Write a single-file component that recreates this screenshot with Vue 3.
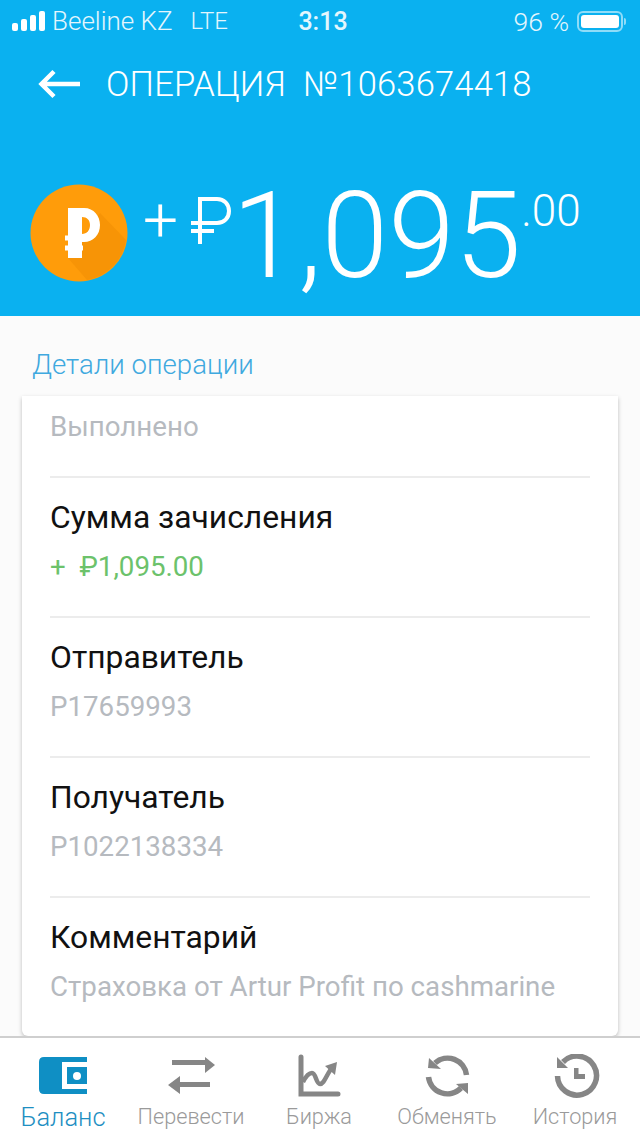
<script setup>
const rows = [
  { title: "Сумма зачисления", value: "+  ₽1,095.00", green: true },
  { title: "Отправитель", value: "P17659993" },
  { title: "Получатель", value: "P1022138334" },
  { title: "Комментарий", value: "Страховка от Artur Profit по cashmarine" },
];
</script>

<template>
  <main class="page">
    <header class="top">
      <div class="status">
        <div class="status-left">
          <span class="signal"><i></i><i></i><i></i><i></i></span>
          <span class="carrier">Beeline KZ</span>
          <span class="lte">LTE</span>
        </div>
        <span class="time">3:13</span>
        <div class="status-right">
          <span>96 %</span>
          <span class="battery"><b></b></span>
          <span class="battery-tip"></span>
        </div>
      </div>
      <div class="title-row">
        <svg class="back" width="44" height="32" viewBox="0 0 44 32">
          <path d="M42 16H4M16 3.500 3.500 16 16 28.500" fill="none" stroke="#fff" stroke-width="4.500" />
        </svg>
        <h1>ОПЕРАЦИЯ&nbsp; №1063674418</h1>
      </div>
      <div class="amount-row">
        <div class="coin">
          <svg width="98" height="98" viewBox="0 0 98 98">
            <circle cx="49" cy="49" r="48.500" fill="#ff9c0a" />
            <path d="M70 29 96 56A48 48 0 0 1 57 96L38 74Z" fill="#f79406" />
            <path fill-rule="evenodd" d="M38 24H54C64 24 70 32 70 41 70 51 63 58 54 58H52V74H38ZM52 33V50C57 50 60 46 60 41 60 36 57 33 52 33Z" fill="#fff" />
            <path d="M35 54H53M35 64H53" stroke="#fff" stroke-width="5" />
          </svg>
        </div>
        <span class="plus">+</span>
        <svg class="rub" width="40" height="47" viewBox="0 0 40 47">
          <path d="M9 47V2H26C33 2 38 7 38 14 38 21 33 26 26 26H0M0 34H23" fill="none" stroke="#fff" stroke-width="4" />
        </svg>
        <span class="sum">1,095</span>
        <span class="cents">.00</span>
      </div>
    </header>

    <section class="details">
      <h2>Детали операции</h2>
      <div class="card">
        <div class="row first">
          <span class="value">Выполнено</span>
        </div>
        <div v-for="row in rows" :key="row.title" class="row">
          <span class="label">{{ row.title }}</span>
          <span class="value" :class="{ green: row.green }">{{ row.value }}</span>
        </div>
      </div>
    </section>

    <nav class="tabs">
      <div class="tab active">
        <svg width="50" height="46" viewBox="0 0 50 46">
          <path d="M5 3H48V8H23V35H48V40H5Q0 40 0 35V8Q0 3 5 3Z" fill="#0f8fc4" />
          <path d="M28 13H48V30H28Z" fill="#0f8fc4" />
          <circle cx="38" cy="22" r="4" fill="#fff" />
        </svg>
        <span>Баланс</span>
      </div>
      <div class="tab">
        <svg width="50" height="46" viewBox="0 0 50 46">
          <path d="M5 6H38V11H5ZM38 3 48 11 38 19ZM13 28H43V33H13ZM13 22V40L1 31Z" fill="#868686" />
        </svg>
        <span>Перевести</span>
      </div>
      <div class="tab">
        <svg width="50" height="46" viewBox="0 0 50 46">
          <path d="M6 3V40H43" fill="none" stroke="#868686" stroke-width="5" stroke-linecap="round" />
          <path d="M8 28C11 22 14 19 17 19 21 19 21 30 25 30 29 30 31 22 36 15" fill="none" stroke="#868686" stroke-width="4.500" />
          <path d="M30 12 42 8 40 21Z" fill="#868686" />
        </svg>
        <span>Биржа</span>
      </div>
      <div class="tab">
        <svg width="50" height="46" viewBox="0 0 50 46">
          <path d="M12 9A19 19 0 0 1 43.500 21" fill="none" stroke="#868686" stroke-width="5.500" />
          <path d="M5.500 23A19 19 0 0 0 38 34" fill="none" stroke="#868686" stroke-width="5.500" />
          <path d="M6 4 18 15 5 14ZM45 29 45 40 33 30Z" fill="#868686" />
        </svg>
        <span>Обменять</span>
      </div>
      <div class="tab">
        <svg width="50" height="46" viewBox="0 0 50 46">
          <path d="M12 8A19.500 19.500 0 1 1 6.500 22" fill="none" stroke="#868686" stroke-width="5.500" />
          <path d="M6 3 17 14 6 14Z" fill="#868686" />
          <path d="M23 14H27.500V20H34V25H23Z" fill="#868686" />
        </svg>
        <span>История</span>
      </div>
    </nav>
  </main>
</template>

<style scoped>
.page {
  width: 640px;
  height: 1136px;
  display: flex;
  flex-direction: column;
  background: #fbfbfb;
  font-family: Roboto, "Liberation Sans", sans-serif;
  overflow: hidden;
}
.top {
  height: 316px;
  background: #0ab1f0;
  color: #fff;
  flex-shrink: 0;
}
.status {
  height: 42px;
  display: grid;
  grid-template-columns: 1fr auto 1fr;
  align-items: center;
  padding: 0 12px;
  font-size: 26px;
  color: #e4f6fd;
}
.status-left {
  display: flex;
  align-items: center;
}
.signal {
  display: flex;
  align-items: flex-end;
  gap: 3px;
  margin-right: 7px;
}
.signal i {
  width: 6px;
  background: #fff;
  border-radius: 2px;
}
.signal i:nth-child(1) { height: 8px; }
.signal i:nth-child(2) { height: 12px; }
.signal i:nth-child(3) { height: 16px; }
.signal i:nth-child(4) { height: 20px; }
.carrier {
  font-weight: 300;
}
.lte {
  margin-left: 18px;
  font-size: 24px;
  font-weight: 300;
}
.time {
  font-size: 25px;
  font-weight: 500;
  margin-left: 6px;
}
.status-right {
  display: flex;
  align-items: center;
  justify-content: flex-end;
  font-weight: 300;
  font-size: 26.500px;
}
.battery {
  width: 46px;
  height: 21px;
  margin-left: 8px;
  border: 2px solid #8fdcf8;
  border-radius: 6px;
  padding: 2px;
  box-sizing: border-box;
  display: flex;
}
.battery b {
  flex: 1;
  background: #fff;
  border-radius: 3px;
}
.battery-tip {
  width: 2px;
  height: 7px;
  margin: 0 2px 0 1px;
  background: #8fdcf8;
  border-radius: 0 2px 2px 0;
}
.title-row {
  height: 84px;
  display: flex;
  align-items: center;
  padding-left: 38px;
}
.back {
  flex-shrink: 0;
}
h1 {
  margin: 0 0 0 24px;
  font-size: 34.500px;
  font-weight: 300;
  white-space: nowrap;
  letter-spacing: 0.2px;
}
.amount-row {
  position: relative;
  height: 190px;
  display: flex;
  align-items: flex-start;
  padding-left: 30px;
}
.coin {
  margin-top: 58px;
  height: 98px;
}
.plus {
  font-size: 62px;
  font-weight: 300;
  line-height: 60px;
  margin: 64px 0 0 15px;
}
.rub {
  margin: 71px 0 0 13px;
}
.sum {
  font-size: 120px;
  font-weight: 300;
  line-height: 120px;
  margin: 50px 0 0 1px;
}
.cents {
  font-size: 44px;
  font-weight: 300;
  line-height: 50px;
  margin: 60px 0 0 0;
}
.details {
  flex: 1;
  min-height: 0;
}
h2 {
  margin: 0;
  height: 80px;
  padding: 33px 0 0 32px;
  box-sizing: border-box;
  font-size: 27.600px;
  line-height: 32px;
  font-weight: 300;
  color: #3fa9df;
}
.card {
  width: 596px;
  height: 640px;
  margin-left: 22px;
  background: #fff;
  box-shadow: 0 2px 4px rgba(0, 0, 0, 0.25);
  border-radius: 0 0 6px 6px;
  padding: 0 28px;
  box-sizing: border-box;
}
.row {
  height: 140px;
  border-top: 2px solid #ececec;
  box-sizing: border-box;
  display: flex;
  flex-direction: column;
  padding-top: 22px;
  gap: 17px;
}
.row.first {
  height: 80px;
  border-top: 0;
  padding-top: 15px;
}
.label {
  font-size: 31.800px;
  line-height: 34px;
  color: #111;
}
.value {
  font-size: 27.700px;
  line-height: 32px;
  color: #b6babf;
  white-space: pre;
}
.value.green {
  color: #6cc26b;
}
.tabs {
  height: 100px;
  flex-shrink: 0;
  display: grid;
  grid-template-columns: repeat(5, 128px);
  border-top: 2px solid #cfcfcf;
  background: #fff;
  box-sizing: border-box;
}
.tab {
  display: flex;
  flex-direction: column;
  align-items: center;
  color: #9a9a9a;
  font-size: 21.700px;
  font-weight: 300;
}
.tab svg {
  margin-top: 16px;
}
.tab span {
  margin: 4px 2px 0 0;
  line-height: 26px;
  white-space: nowrap;
}
.tab.active {
  color: #1e8fc2;
  font-size: 25.500px;
}
</style>

<style>
html, body {
  margin: 0;
  background: #fbfbfb;
}
</style>
